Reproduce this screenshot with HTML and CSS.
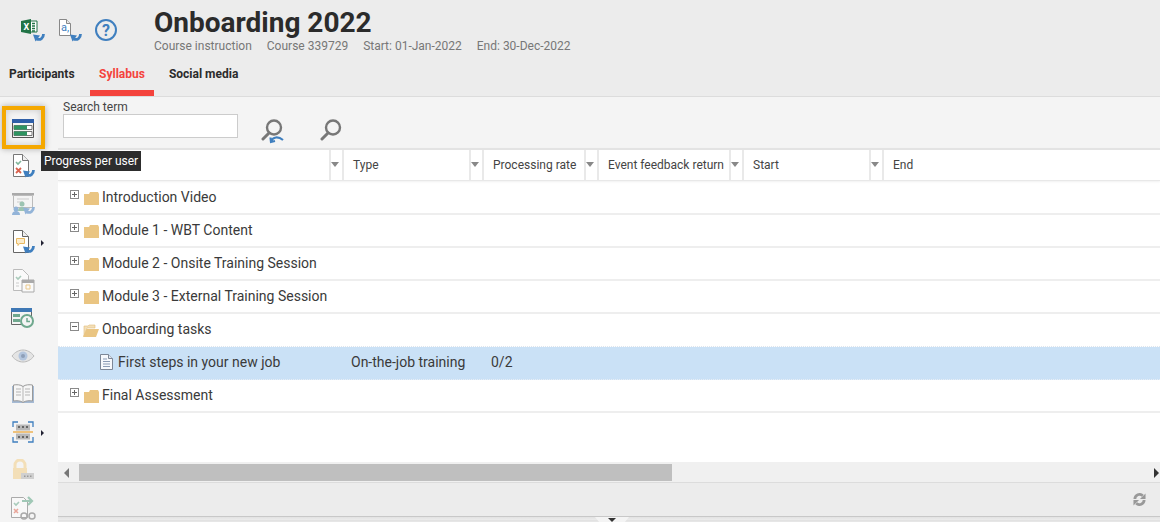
FILE: index.html
```html
<!DOCTYPE html>
<html lang="en">
<head>
<meta charset="utf-8">
<title>Onboarding 2022</title>
<link rel="stylesheet" href="styles.css">
</head>
<body>
<div class="app">
  <header class="head">
    <div class="head-top">
      <div class="head-icons">
        <svg width="24" height="24" viewBox="0 0 24 24"><path d="M9 2h7v11H9z" fill="#fff" stroke="#217346"/><path d="M11 4.500h3M11 7h3M11 9.500h3M11 12h3" stroke="#217346" stroke-width="1.300"/><path d="M0 2L10 0v15L0 13z" fill="#217346"/><text x="2.500" y="11" class="xl">X</text><g transform="translate(12 14)"><path d="M10.500 1c0 4-3 6.500-7 5" fill="none" stroke="#3f7fbf" stroke-width="2.800"/><path d="M0 1.500l7 1-4.500 6z" fill="#3f7fbf"/></g></svg>
        <svg width="24" height="24" viewBox="0 0 24 24"><path d="M1.500 .5h7l4 4v12h-11z" fill="#fff" stroke="#888"/><path d="M8.500 .5v4h4" fill="#e8e8e8" stroke="#888"/><text x="3" y="12" class="al">a,</text><g transform="translate(12 14)"><path d="M10.500 1c0 4-3 6.500-7 5" fill="none" stroke="#3f7fbf" stroke-width="2.800"/><path d="M0 1.500l7 1-4.500 6z" fill="#3f7fbf"/></g></svg>
        <svg width="22" height="22" viewBox="0 0 22 22"><circle cx="11" cy="11" r="10" fill="none" stroke="#3f7fbf" stroke-width="2"/><text x="11" y="17" text-anchor="middle" class="q">?</text></svg>
      </div>
      <div class="head-text">
        <h1 class="title">Onboarding 2022</h1>
        <div class="meta"><span>Course instruction</span><span>Course 339729</span><span>Start: 01-Jan-2022</span><span>End: 30-Dec-2022</span></div>
      </div>
    </div>
    <nav class="tabs">
      <a class="tab">Participants</a>
      <a class="tab tab-on">Syllabus</a>
      <a class="tab">Social media</a>
    </nav>
  </header>

  <div class="body">
    <aside class="side">
      <div class="tool tool-on">
        <svg width="22" height="19" viewBox="0 0 22 19"><path d="M.5 .5h21v18H.5z" fill="#f4f4f4" stroke="#555"/><path d="M0 0h22v4H0z" fill="#2f5fa8"/><path d="M2 6.500h18v4H2zM2 12.500h18v4H2z" fill="#fff" stroke="#555" stroke-width=".8"/><path d="M2 6.500h13v4H2zM2 12.500h13v4H2z" fill="#2e9461"/></svg>
        <div class="tip">Progress per user</div>
      </div>
      <div class="tool">
        <svg width="24" height="26" viewBox="0 0 24 26"><path d="M2.500 1.500h9l6 6v16h-15z" fill="#fff" stroke="#777"/><path d="M11.500 1.500v6h6" fill="#eee" stroke="#777"/><path d="M5 9l2 2 3-3" fill="none" stroke="#7fb59a" stroke-width="1.600"/><path d="M5 15l5 5M10 15l-5 5" stroke="#d9634f" stroke-width="1.800"/><g transform="translate(12 16)"><path d="M10.500 1c0 4-3 6.500-7 5" fill="none" stroke="#3f7fbf" stroke-width="2.800"/><path d="M0 1.500l7 1-4.500 6z" fill="#3f7fbf"/></g></svg>
      </div>
      <div class="tool">
        <svg width="24" height="24" viewBox="0 0 24 24"><path d="M1 1h22v2.500H1z" fill="#aaa"/><path d="M2.500 3.500h19v12h-19z" fill="#f4f4f4" stroke="#bbb"/><path d="M6 7h12M6 10h6" stroke="#ccc"/><circle cx="5" cy="17" r="2.500" fill="#93b4d8"/><path d="M1 23c0-3 2-4 4-4s4 1 4 4z" fill="#93b4d8"/><circle cx="11" cy="12" r="2.500" fill="#9cc4b2"/><path d="M7 19c0-3 2-4 4-4s4 1 4 4z" fill="#9cc4b2"/><g transform="translate(12 14)"><path d="M10.500 1c0 4-3 6.500-7 5" fill="none" stroke="#93b4d8" stroke-width="2.800"/><path d="M0 1.500l7 1-4.500 6z" fill="#93b4d8"/></g></svg>
      </div>
      <div class="tool">
        <svg width="24" height="26" viewBox="0 0 24 26"><path d="M2.500 1.500h9l6 6v16h-15z" fill="#fff" stroke="#666"/><path d="M11.500 1.500v6h6" fill="#eee" stroke="#666"/><path d="M5.500 9.500h8v5h-5l-1.500 2v-2h-1.500z" fill="#fbeccd" stroke="#e8b860"/><g transform="translate(12 16)"><path d="M10.500 1c0 4-3 6.500-7 5" fill="none" stroke="#3f7fbf" stroke-width="2.800"/><path d="M0 1.500l7 1-4.500 6z" fill="#3f7fbf"/></g></svg>
        <i class="more"></i>
      </div>
      <div class="tool">
        <svg width="24" height="25" viewBox="0 0 24 25"><path d="M2.500 1.500h9l6 6v15h-15z" fill="#fafafa" stroke="#bbb"/><path d="M5 9l2 2 3-3" fill="none" stroke="#a9cbbb" stroke-width="1.600"/><path d="M5 15h3M5 18h3" stroke="#ccc"/><path d="M11 12h12v12H11z" fill="#fafafa" stroke="#aaa"/><path d="M11 12h12v3H11z" fill="#aaa"/><path d="M15 17h4v4h-4z" fill="none" stroke="#eac88a"/></svg>
      </div>
      <div class="tool">
        <svg width="24" height="20" viewBox="0 0 24 20"><path d="M.5 .5h20v16H.5z" fill="#f4f4f4" stroke="#666"/><path d="M0 0h21v4H0z" fill="#3f78b5"/><path d="M2 6h7v3H2zM2 11h7v3H2z" fill="#6fa88e"/><circle cx="16" cy="13" r="6" fill="#f4f4f4" stroke="#6fa88e" stroke-width="2"/><path d="M16 10v3.500h3" fill="none" stroke="#6fa88e" stroke-width="1.500"/></svg>
      </div>
      <div class="tool">
        <svg width="24" height="14" viewBox="0 0 24 14"><path d="M1 7c3-4 7-6 11-6s8 2 11 6c-3 4-7 6-11 6S4 11 1 7z" fill="#e4e4e4" stroke="#bbb"/><circle cx="12" cy="7" r="4.500" fill="#b3c5dd"/><circle cx="12" cy="7" r="2" fill="#8e9fb8"/></svg>
      </div>
      <div class="tool">
        <svg width="24" height="21" viewBox="0 0 24 21"><path d="M1 2v17h22V2" fill="#a5bad4"/><path d="M2.500 1c3-.5 7-.5 9.500 1.500C14.500 .5 18.500 .5 21.500 1v16c-3-.5-7-.5-9.500 1.500C9.500 16.500 5.500 16.500 2.500 17z" fill="#f6f6f6" stroke="#999"/><path d="M12 3v15M5 5h5M5 8h5M5 11h5M14 5h5M14 8h5M14 11h5" stroke="#b5b5b5"/></svg>
      </div>
      <div class="tool">
        <svg width="22" height="22" viewBox="0 0 22 22"><path d="M1 6V1h5M16 1h5v5M21 16v5h-5M6 21H1v-5" fill="none" stroke="#3f7fbf" stroke-width="1.300"/><path d="M4 3.500h14v6H4zM4 12.500h14v6H4z" fill="#b8b8b8"/><path d="M6 5h2v2H6zM10 5h2v2h-2zM14 5h2v2h-2zM6 15h2v2H6zM10 15h2v2h-2zM14 15h2v2h-2z" fill="#666"/><path d="M1 10h20v2H1z" fill="#eec27c"/></svg>
        <i class="more"></i>
      </div>
      <div class="tool">
        <svg width="24" height="22" viewBox="0 0 24 22"><path d="M4 9V6a5 5 0 0 1 10 0v3" fill="none" stroke="#f3dfb8" stroke-width="3"/><path d="M2 9h14v11H2z" fill="#f3dfb8"/><path d="M10 14h13v6H10z" fill="#d0d0d0"/><path d="M13 16.500h1.500v1.500H13zM16 16.500h1.500v1.500H16zM19 16.500h1.500v1.500H19z" fill="#999"/></svg>
      </div>
      <div class="tool">
        <svg width="26" height="26" viewBox="0 0 26 26"><path d="M1.500 2.500h12l4 4v16h-16z" fill="#f8f8f8" stroke="#aaa"/><path d="M4 8l2 2 3-3" fill="none" stroke="#a9cbbb" stroke-width="1.600"/><path d="M4 14l4 4M8 14l-4 4" stroke="#e8a69a" stroke-width="1.600"/><path d="M12 6h9M18 2l4 4-4 4" fill="none" stroke="#a0c8b6" stroke-width="2.200"/><circle cx="14" cy="21" r="3" fill="none" stroke="#aaa" stroke-width="1.500"/><circle cx="22" cy="21" r="3" fill="none" stroke="#aaa" stroke-width="1.500"/></svg>
      </div>
    </aside>

    <main class="main">
      <div class="search">
        <label class="field"><span class="field-label">Search term</span><input class="field-input" type="text"></label>
        <svg class="s1" width="26" height="26" viewBox="0 0 26 26"><circle cx="13" cy="9.500" r="7" fill="none" stroke="#777" stroke-width="2.400"/><path d="M8 15l-6 6" stroke="#777" stroke-width="3" stroke-linecap="round"/><path d="M10 23c2-4 7-5 12-1M9.500 19.500l.5 4.500 4-1" fill="none" stroke="#3f7fbf" stroke-width="2.200"/></svg>
        <svg class="s2" width="22" height="22" viewBox="0 0 22 22"><circle cx="13" cy="8.500" r="7" fill="none" stroke="#777" stroke-width="2.400"/><path d="M8 14l-6 6" stroke="#777" stroke-width="3" stroke-linecap="round"/></svg>
      </div>

      <div class="grid-head">
        <div class="col"><i class="arrow"></i></div>
        <div class="col"><span>Type</span><i class="arrow"></i></div>
        <div class="col"><span>Processing rate</span><i class="arrow"></i></div>
        <div class="col"><span>Event feedback return</span><i class="arrow"></i></div>
        <div class="col"><span>Start</span><i class="arrow"></i></div>
        <div class="col col-last"><span>End</span></div>
      </div>

      <div class="rows">
        <div class="row"><div class="tree"><i class="box plus"></i><svg class="fold" width="15" height="13" viewBox="0 0 15 13"><path d="M0 2h5l1-2h8l1 2v11H0z" fill="#eac582"/></svg><span>Introduction Video</span></div></div>
        <div class="row"><div class="tree"><i class="box plus"></i><svg class="fold" width="15" height="13" viewBox="0 0 15 13"><path d="M0 2h5l1-2h8l1 2v11H0z" fill="#eac582"/></svg><span>Module 1 - WBT Content</span></div></div>
        <div class="row"><div class="tree"><i class="box plus"></i><svg class="fold" width="15" height="13" viewBox="0 0 15 13"><path d="M0 2h5l1-2h8l1 2v11H0z" fill="#eac582"/></svg><span>Module 2 - Onsite Training Session</span></div></div>
        <div class="row"><div class="tree"><i class="box plus"></i><svg class="fold" width="15" height="13" viewBox="0 0 15 13"><path d="M0 2h5l1-2h8l1 2v11H0z" fill="#eac582"/></svg><span>Module 3 - External Training Session</span></div></div>
        <div class="row row-open"><div class="tree"><i class="box"></i><svg class="fold fold-open" width="16" height="13" viewBox="0 0 16 13"><path d="M1 12V2h4l1-1h6v3H4z" fill="#f3dfb8" stroke="#e3bd7a" stroke-width=".6"/><path d="M3.500 5H16l-3 8H0z" fill="#eac582"/></svg><span>Onboarding tasks</span></div></div>
        <div class="row row-sel">
          <div class="leaf"><svg width="13" height="16" viewBox="0 0 13 16"><path d="M.5 .5h8l4 4v11H.5z" fill="#f6f8fc" stroke="#7d8797"/><path d="M8.500 .5v4h4" fill="#dfe4ee" stroke="#7d8797"/><path d="M3 5h4M3 7.500h7M3 10h7M3 12.500h7" stroke="#8b9bb5"/></svg><span>First steps in your new job</span></div>
          <div class="cell">On-the-job training</div>
          <div class="cell">0/2</div>
        </div>
        <div class="row"><div class="tree"><i class="box plus"></i><svg class="fold" width="15" height="13" viewBox="0 0 15 13"><path d="M0 2h5l1-2h8l1 2v11H0z" fill="#eac582"/></svg><span>Final Assessment</span></div></div>
      </div>

      <div class="hscroll">
        <i class="sc-left"></i>
        <div class="sc-track"><div class="sc-thumb"></div></div>
        <i class="sc-right"></i>
      </div>
      <div class="foot">
        <svg width="13" height="13" viewBox="0 0 14 14"><path d="M2 6.500a5 5 0 0 1 8.500-3.500M12 7.500a5 5 0 0 1-8.500 3.500" fill="none" stroke="#999" stroke-width="3"/><path d="M7.500 6.500h6V.5zM6.500 7.500h-6v6z" fill="#999"/></svg>
      </div>
      <div class="strip"><div class="handle"><i class="handle-arrow"></i></div></div>
    </main>
  </div>
</div>
</body>
</html>
```
FILE: styles.css
```css
*, *::before, *::after { box-sizing: border-box; }
html, body { margin: 0; height: 100%; overflow: hidden; }
body { font-family: Roboto, "Liberation Sans", sans-serif; color: #333; background: #fff; }
svg { display: block; flex: none; }
.app { width: 1160px; height: 522px; display: flex; flex-direction: column; overflow: hidden; }

.head { height: 97px; background: #ececec; border-bottom: 1px solid #dcdcdc; display: flex; flex-direction: column; }
.head-top { display: flex; height: 60px; padding-top: 8px; }
.head-icons { width: 154px; display: flex; align-items: flex-start; gap: 13px; padding: 11px 0 0 21px; }
.xl { font: bold 9px Roboto, sans-serif; fill: #fff; }
.al { font: 11px Roboto, sans-serif; fill: #3f7fbf; }
.q { font: bold 16px Roboto, sans-serif; fill: #3f7fbf; }
.title { margin: 0; font-size: 28px; line-height: 30px; font-weight: 700; color: #2b2b2b; }
.meta { display: flex; gap: 15px; font-size: 12px; line-height: 16px; color: #777; }
.tabs { display: flex; gap: 6px; height: 36px; }
.tab { padding: 0 9px; font-size: 12px; font-weight: 700; line-height: 28px; color: #2b2b2b; height: 36px; }
.tab-on { color: #f4433c; border-bottom: 6px solid #f4433c; margin-left: .5px; }

.body { flex: 1; display: flex; min-height: 0; }
.side { width: 58px; background: #f4f4f4; display: flex; flex-direction: column; padding-top: 12px; position: relative; z-index: 2; }
.tool { position: relative; flex: none; height: 38px; width: 46px; display: flex; align-items: center; justify-content: center; }
.tool-on::before { content: ""; position: absolute; left: 2px; top: -3px; width: 43px; height: 43px; border: 4px solid #f5a800; box-shadow: 0 0 6px rgba(0,0,0,.3), inset 0 0 7px rgba(0,0,0,.18); }
.tool svg { position: relative; }
.tip { position: absolute; left: 41px; top: 42px; z-index: 5; background: #2d2d2d; color: #fff; font-size: 12px; line-height: 20px; padding: 0 3px; white-space: nowrap; width: 100px; height: 20px; }
.more { position: absolute; left: 41px; top: 17px; width: 0; height: 0; border-left: 3px solid #223; border-top: 3px solid transparent; border-bottom: 3px solid transparent; }

.main { flex: 1; min-width: 0; display: flex; flex-direction: column; }
.search { height: 51px; background: #f4f4f4; padding: 3px 0 0 5px; display: flex; align-items: flex-start; }
.field { display: flex; flex-direction: column; width: 175px; }
.field-label { font-size: 12px; line-height: 14px; color: #444; }
.field-input { width: 175px; height: 24px; border: 1px solid #ccc; background: #fff; padding: 0; outline: 0; }
.s1 { margin: 18px 0 0 23px; }
.s2 { margin: 19px 0 0 33px; }

.grid-head, .row { display: grid; grid-template-columns: 285px 140px 115px 145px 140px 277px; }
.grid-head { height: 33px; background: #fff; border-top: 2px solid #e3e3e3; border-bottom: 1px solid #e8e8e8; box-shadow: 0 1px 2px rgba(0,0,0,.06); position: relative; }
.col { display: flex; align-items: center; font-size: 12px; color: #444; padding-left: 10px; margin-right: -1px; border-right: 2px solid #e9e9e9; position: relative; }
.col-last { border-right: 0; }
.arrow { position: absolute; right: 0; top: 0; bottom: 0; width: 13px; border-left: 2px solid #e9e9e9; }
.arrow::after { content: ""; position: absolute; left: 0; top: 12px; border-top: 5px solid #888; border-left: 4.500px solid transparent; border-right: 4.500px solid transparent; }

.rows { height: 281px; background: #fff; padding-top: 1px; }
.row { height: 33px; padding-bottom: 1px; border-bottom: 2px solid #eeeeee; font-size: 14px; color: #3a3a3a; align-items: center; }
.row-open { border-bottom: 1px dotted #dfe6ee; padding-bottom: 2px; }
.row-sel { background: #cae1f6; border-bottom: 1px dotted #e8eef5; padding-bottom: 2px; }
.tree { display: flex; align-items: center; padding-left: 12px; white-space: nowrap; }
.box { width: 9px; height: 9px; border: 1px solid #8a8a8a; position: relative; margin-top: -5px; flex: none; }
.box::before { content: ""; position: absolute; left: 1px; right: 1px; top: 3px; height: 1px; background: #666; }
.plus::after { content: ""; position: absolute; top: 1px; bottom: 1px; left: 3px; width: 1px; background: #666; }
.fold { margin: 3px 3px 0 5px; }
.fold-open { margin-left: 4px; }
.leaf { display: flex; align-items: center; gap: 5px; padding-left: 42px; white-space: nowrap; }
.cell { padding-left: 8px; white-space: nowrap; }

.hscroll { height: 21px; background: #f0f0f0; border-bottom: 1px solid #dcdcdc; display: flex; align-items: flex-start; padding-top: 2px; }
.sc-left, .sc-right { width: 0; height: 0; border-top: 5px solid transparent; border-bottom: 5px solid transparent; flex: none; }
.sc-left { border-right: 5px solid #777; margin: 4px 10px 0 6px; }
.sc-right { border-left: 5px solid #333; margin: 4px 1px 0 3px; }
.sc-track { flex: 1; height: 17px; }
.sc-thumb { width: 593px; height: 17px; background: #bfbfbf; }
.foot { height: 34px; background: #ececec; border-bottom: 1px solid #c8c8c8; display: flex; align-items: center; justify-content: flex-end; padding-right: 14px; }
.strip { flex: 1; background: linear-gradient(#e2e2e2, #ececec 60%, #d8d8d8 80%, #f4f4f4); display: flex; justify-content: center; padding-left: 6px; }
.handle { width: 34px; height: 5px; background: #f4f4f4; clip-path: polygon(0 0, 100% 0, 88% 100%, 12% 100%); display: flex; justify-content: center; }
.handle-arrow { width: 0; height: 0; margin-top: 1px; border-top: 4px solid #333; border-left: 4px solid transparent; border-right: 4px solid transparent; }
```
